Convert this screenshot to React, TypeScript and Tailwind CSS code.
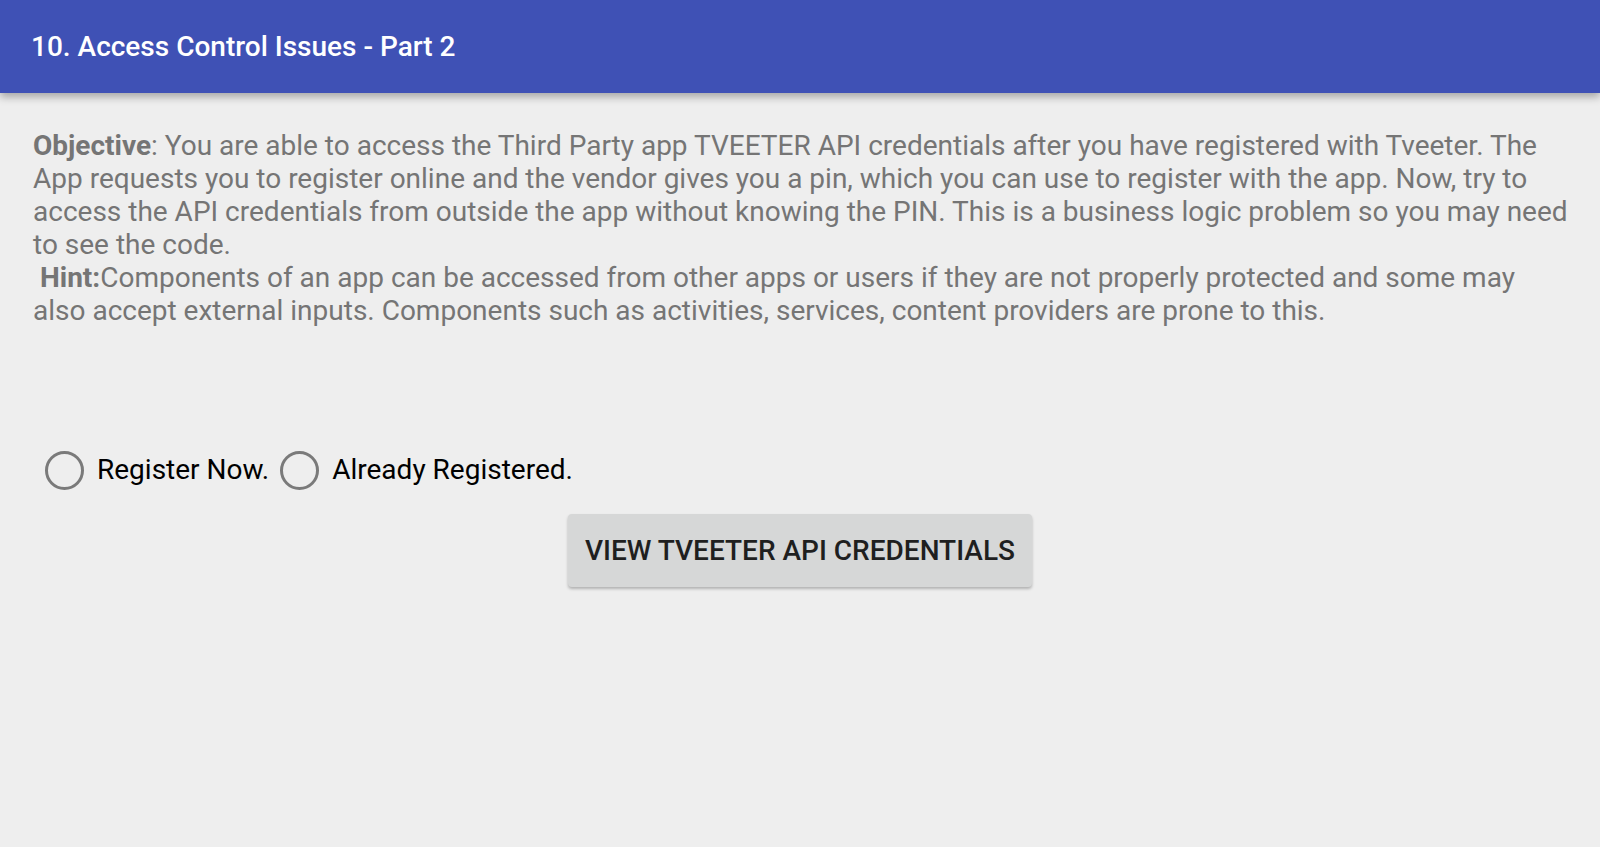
import React from "react";

function Radio({ label }: { label: string }) {
  return (
    <label className="mr-[6px] flex items-center">
      <span className="flex h-[48px] w-[48px] items-center justify-center">
        <span className="block h-[39px] w-[39px] rounded-full border-[3px] border-[#7a7a7a] blur-[0.7px]" />
      </span>
      <span className="ml-[9px] text-[28px] text-black">{label}</span>
    </label>
  );
}

export default function App() {
  return (
    <div
      className="min-h-[847px] w-full bg-[#eeeeee]"
      style={{ fontFamily: "Roboto, 'Noto Sans', sans-serif" }}
    >
      <header className="relative z-10 flex h-[93px] items-center bg-[#3f51b5] px-[31px] shadow-[0_4px_8px_rgba(0,0,0,0.3)]">
        <h1 className="text-[28px] font-medium text-white">10. Access Control Issues - Part 2</h1>
      </header>
      <main className="pl-[33px] pr-[10px] pt-[36px]">
        <p className="text-[28px] leading-[33px] text-[#757575]">
          <b>Objective</b>: You are able to access the Third Party app TVEETER API credentials after you have registered with Tveeter. The
          <br />
          App requests you to register online and the vendor gives you a pin, which you can use to register with the app. Now, try to
          <br />
          access the API credentials from outside the app without knowing the PIN. This is a business logic problem so you may need
          <br />
          to see the code.
          <br />
          &nbsp;<b>Hint:</b>Components of an app can be accessed from other apps or users if they are not properly protected and some may
          <br />
          also accept external inputs. Components such as activities, services, content providers are prone to this.
        </p>
        <div className="mt-[119px] flex items-center pl-[7px]">
          <Radio label="Register Now." />
          <Radio label="Already Registered." />
        </div>
        <div className="mt-[20px] flex justify-center pr-[23px]">
          <button className="h-[73px] w-[464px] rounded-[4px] bg-[#d6d7d7] text-[28px] font-medium uppercase text-[#1f1f1f] shadow-[0_2px_3px_rgba(0,0,0,0.25)]">
            View Tveeter API Credentials
          </button>
        </div>
      </main>
    </div>
  );
}
